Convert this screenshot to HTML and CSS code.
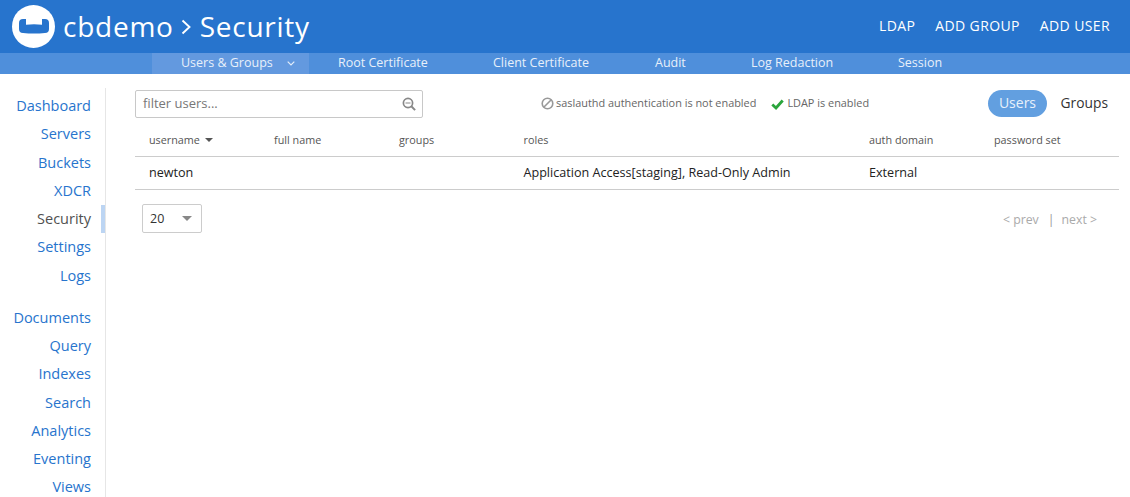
FILE: index.html
```html
<!DOCTYPE html>
<html lang="en">
<head>
<meta charset="utf-8">
<title>Security</title>
<link rel="stylesheet" href="styles.css">
</head>
<body>
<header class="topbar">
  <div class="brand">
    <svg class="logo" width="43" height="43" viewBox="0 0 43 43"><circle cx="21.500" cy="21.500" r="21.500" fill="#fff"/><path d="M7 18a4 4 0 0 1 4-4h3v5.700q8-.7 16 0V14h3a4 4 0 0 1 4 4v6a4 4 0 0 1-4 4q-11 1-22 0a4 4 0 0 1-4-4z" fill="#2774cd"/></svg>
    <h1 class="title"><span>cbdemo</span><svg class="chev" width="10" height="16" viewBox="0 0 10 16"><path d="m1.500 1.500 7 6.500-7 6.500" fill="none" stroke="#fff" stroke-width="1.900"/></svg><span>Security</span></h1>
  </div>
  <nav class="actions"><a>LDAP</a><a>ADD GROUP</a><a>ADD USER</a></nav>
</header>
<nav class="subnav">
  <a class="tab active">Users &amp; Groups <svg class="tabchev" width="8" height="5" viewBox="0 0 8 5"><path d="M.7.7 4 4 7.300.7" fill="none" stroke="#e3edf9" stroke-width="1.200"/></svg></a>
  <a class="tab t2">Root Certificate</a>
  <a class="tab t3">Client Certificate</a>
  <a class="tab t4">Audit</a>
  <a class="tab t5">Log Redaction</a>
  <a class="tab t6">Session</a>
</nav>
<div class="shell">
  <aside class="side">
    <ul class="menu">
      <li>Dashboard</li><li>Servers</li><li>Buckets</li><li>XDCR</li><li class="current">Security</li><li>Settings</li><li>Logs</li>
    </ul>
    <ul class="menu second">
      <li>Documents</li><li>Query</li><li>Indexes</li><li>Search</li><li>Analytics</li><li>Eventing</li><li>Views</li>
    </ul>
  </aside>
  <main class="main">
    <div class="tools">
      <div class="filter">
        <span class="ftext">filter users...</span>
        <svg width="14" height="14" viewBox="0 0 14 14"><circle cx="6" cy="6" r="4.600" fill="none" stroke="#888" stroke-width="1.700"/><path d="m9.300 9.300 3.800 3.800" stroke="#888" stroke-width="2"/><path d="M3.500 6h5" stroke="#888"/></svg>
      </div>
      <div class="status">
        <svg width="13" height="13" viewBox="0 0 13 13"><circle cx="6.500" cy="6.500" r="5.300" fill="none" stroke="#999" stroke-width="1.600"/><path d="m3 10 7-7" stroke="#999" stroke-width="1.600"/></svg>
        <span class="stext">saslauthd authentication is not enabled</span>
        <svg class="check" width="13" height="11" viewBox="0 0 13 11"><path d="m1.300 5.500 3.700 3.500 6.700-7.500" fill="none" stroke="#2aa53c" stroke-width="2.800"/></svg>
        <span class="stext">LDAP is enabled</span>
      </div>
      <div class="pills"><span class="pill on">Users</span><span class="pill">Groups</span></div>
    </div>
    <div class="row head">
      <div class="c1">username <i class="caret"></i></div><div class="c2">full name</div><div class="c3">groups</div><div class="c4">roles</div><div class="c5">auth domain</div><div class="c6">password set</div>
    </div>
    <div class="row body">
      <div class="c1">newton</div><div class="c2"></div><div class="c3"></div><div class="c4">Application Access[staging], Read-Only Admin</div><div class="c5">External</div><div class="c6"></div>
    </div>
    <div class="foot">
      <div class="select"><span>20</span><i class="sel-caret"></i></div>
      <div class="pager"><span>&lt; prev</span><span class="sep">|</span><span>next &gt;</span></div>
    </div>
  </main>
</div>
</body>
</html>
```
FILE: styles.css
```css
* { box-sizing: border-box; }
html, body { margin: 0; height: 497px; overflow: hidden; background: #fff; }
body { font-family: "Open Sans", "Noto Sans", sans-serif; color: #333; }
ul { list-style: none; margin: 0; padding: 0; }
a { color: inherit; }
.topbar { height: 53px; background: #2774cd; display: flex; justify-content: space-between; align-items: center; padding: 0 20px 2px 12px; color: #fff; }
.brand { display: flex; align-items: center; gap: 8px; padding-top: 2px; }
.logo { display: block; }
.title { margin: 0; display: flex; align-items: center; font-size: 28px; font-weight: 400; line-height: 38px; letter-spacing: .75px; white-space: nowrap; margin-top: -2px; }
.chev { margin: 2px 9px 0 7px; }
.actions { display: flex; gap: 20px; font-size: 14px; letter-spacing: .38px; }
.subnav { height: 21px; background: #4f8fdb; display: flex; padding-left: 152px; font-size: 12.500px; line-height: 19px; color: #e8f0fa; }
.tab { display: block; white-space: nowrap; }
.tab.active { width: 157px; padding-left: 29px; background: #6399df; line-height: 19px; }
.tabchev { margin-left: 11px; vertical-align: 1px; }
.t2 { margin-left: 29px; width: 155px; }
.t3 { width: 162px; }
.t4 { width: 96px; }
.t5 { width: 147px; }
.shell { display: flex; height: 423px; padding-top: 14px; }
.side { width: 106px; flex: none; border-right: 1px solid #e6e6e6; padding-top: 4px; font-size: 14.500px; color: #2774cd; text-align: right; overflow: hidden; }
.menu li { height: 28.250px; line-height: 28px; padding-right: 14px; position: relative; }
.menu .current { color: #505050; }
.menu .current::after { content: ""; position: absolute; right: 0; top: 0; width: 4px; height: 28px; background: #bcd5f3; }
.second { margin-top: 14px; }
.main { flex: 1; padding: 1px 11px 0 29px; min-width: 0; }
.tools { display: flex; align-items: center; height: 29px; }
.filter { width: 288px; height: 28px; border: 1px solid #c8c8c8; border-radius: 2px; display: flex; justify-content: space-between; align-items: center; padding: 0 6px 0 7px; font-size: 13px; color: #777; }
.ftext { padding-bottom: 2px; }
.status { display: flex; align-items: center; margin-left: 118px; font-size: 10.900px; color: #666; white-space: nowrap; }
.stext { margin-left: 2px; padding-bottom: 2px; }
.check { margin-left: 15px; margin-right: 1px; margin-top: 1px; }
.pills { margin-left: auto; display: flex; font-size: 14px; align-items: center; }
.pill { padding: 0 11px; height: 27px; line-height: 25px; border-radius: 14px; }
.pill.on { background: #629fe0; color: #e8f1fb; padding: 0 10.500px; }
.pill:last-child { padding: 0 11px 0 14px; font-size: 13.800px; }
.row { display: grid; grid-template-columns: 125px 125px 125px 345.500px 125px 1fr; padding-left: 14px; }
.head { height: 39px; border-bottom: 1px solid #ccc; font-size: 10.800px; line-height: 44px; color: #555; }
.body { height: 33px; border-bottom: 1px solid #ccc; font-size: 12.600px; line-height: 31px; color: #222; }
.c4, .c5, .c6 { margin-left: -.5px; }
.caret { display: inline-block; width: 0; height: 0; border: 4px solid transparent; border-top: 4px solid #555; border-bottom: 0; margin-left: 2px; vertical-align: 2px; }
.foot { display: flex; justify-content: space-between; padding: 14px 22px 0 7px; }
.select { width: 60px; height: 29px; border: 1px solid #ccc; border-radius: 2px; display: flex; justify-content: space-between; align-items: center; padding: 0 9px 0 7px; font-size: 12.500px; color: #333; }
.sel-caret { width: 0; height: 0; border: 5px solid transparent; border-top: 5px solid #888; border-bottom: 0; }
.pager { display: flex; font-size: 12.300px; color: #aaa; line-height: 31px; }
.sep { margin: 0 7px 0 9px; color: #999; }
```
